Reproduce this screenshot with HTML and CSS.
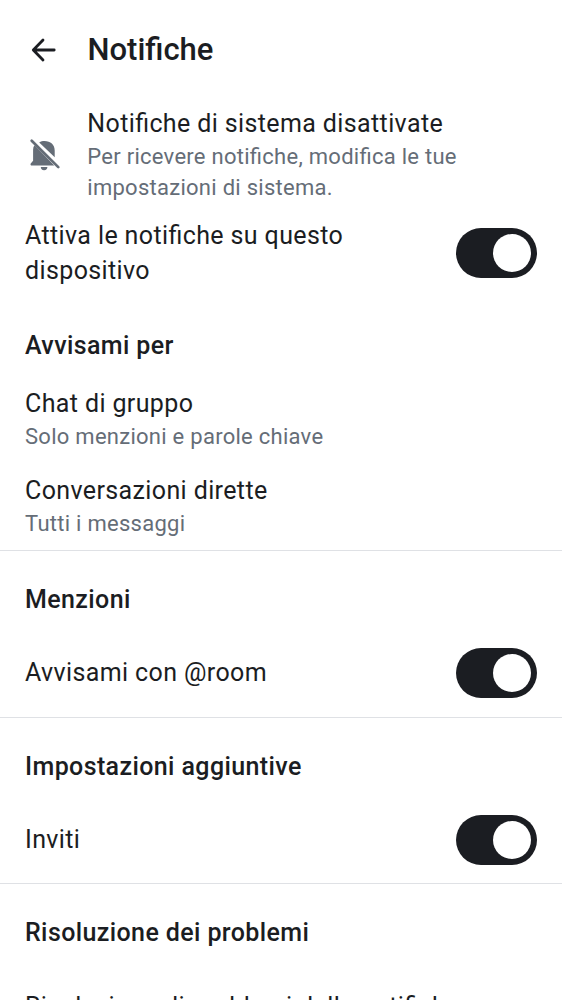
FILE: index.html
```html
<!DOCTYPE html>
<html lang="it">
<head>
<meta charset="utf-8">
<title>Notifiche</title>
<link rel="stylesheet" href="styles.css">
</head>
<body>
<header class="topbar">
  <svg class="back" viewBox="0 0 38 38"><path d="M18 9 8.300 19 18 29M8.500 19h20.700"/></svg>
  <h1>Notifiche</h1>
</header>
<main>
  <section class="notice">
    <svg class="bell" viewBox="0 0 38 38"><path d="M13.200 8.500C14.900 7.300 16.600 6.900 18.500 6.900C24.500 6.900 28.700 10.500 28.700 16.500V23.200ZM8.600 11.300 28.300 31.600H5.700a1.300 1.300 0 0 1-1-2L7.100 26.800V15.500Q7.100 12.800 8.600 11.300ZM14.800 33.100h6.600a3.300 3.100 0 0 1-6.600 0Z"/><path class="slash" d="m5.700 6.700 26.600 26.400"/></svg>
    <div><p class="title">Notifiche di sistema disattivate</p><p class="sub">Per ricevere notifiche, modifica le tue<br>impostazioni di sistema.</p></div>
  </section>
  <section class="row device"><p class="title">Attiva le notifiche su questo<br>dispositivo</p><span class="switch"></span></section>
  <h2 class="first">Avvisami per</h2>
  <section class="item"><p class="title">Chat di gruppo</p><p class="sub">Solo menzioni e parole chiave</p></section>
  <section class="item"><p class="title">Conversazioni dirette</p><p class="sub">Tutti i messaggi</p></section>
  <section class="group"><h2>Menzioni</h2><div class="row"><p class="title">Avvisami con @room</p><span class="switch"></span></div></section>
  <section class="group"><h2>Impostazioni aggiuntive</h2><div class="row"><p class="title">Inviti</p><span class="switch"></span></div></section>
  <section class="group"><h2>Risoluzione dei problemi</h2><div class="row"><p class="title">Risoluzione di problemi delle notifiche</p></div></section>
</main>
</body>
</html>
```
FILE: styles.css
```css
* { box-sizing: border-box; margin: 0; }
body { height: 1000px; overflow: hidden; background: #fff; color: #1b1d22; font-family: Roboto, sans-serif; font-feature-settings: "liga" 1; }
.topbar { display: flex; align-items: center; height: 100px; padding-left: 25px; }
.back { width: 38px; height: 38px; margin-right: 24.5px; fill: none; stroke: #1b1d22; stroke-width: 2.8; stroke-linecap: round; stroke-linejoin: round; }
h1 { font-size: 31px; font-weight: 500; line-height: 40px; }
.notice { display: flex; height: 112px; padding: 7px 25px 0; }
.bell { width: 38px; height: 38px; margin: 27px 23.3px 0 1px; fill: #656d77; }
.slash { stroke: #656d77; stroke-width: 2.7; stroke-linecap: round; }
.title { font-size: 25px; line-height: 34px; letter-spacing: .38px; }
.sub { font-size: 22px; line-height: 31px; letter-spacing: .27px; color: #656d77; }
.row { display: flex; align-items: center; justify-content: space-between; height: 88px; padding: 0 25px; }
.row .title { padding-top: 1px; line-height: 34.4px; }
.device { height: 82px; }
.switch { width: 81px; height: 50px; padding: 6px; border-radius: 25px; background: #1b1d22; }
.switch::after { content: ""; display: block; width: 38px; height: 38px; margin-left: 31px; border-radius: 50%; background: #fff; }
h2 { height: 78px; padding: 30px 25px 0; font-size: 25px; font-weight: 500; line-height: 37px; letter-spacing: .39px; }
.first { height: 79px; padding-top: 33px; }
.item { height: 87px; padding: 14px 25px 0; }
.item + .item { height: 90px; }
.group { height: 166.7px; border-top: 1px solid #dfe1e5; }
```
